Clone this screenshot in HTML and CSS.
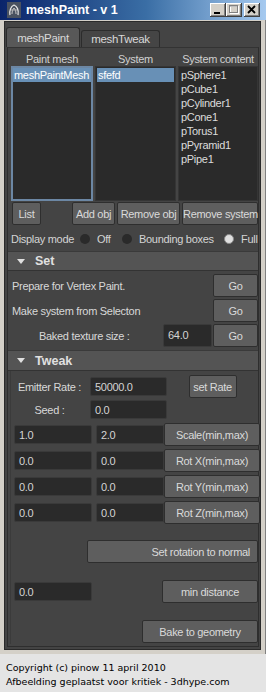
FILE: index.html
```html
<!DOCTYPE html>
<html lang="en">

<head>
    <meta charset="UTF-8">
    <meta name="viewport" content="width=device-width, initial-scale=1.0">
    <title>meshPaint - v 1</title>
    <link rel="stylesheet" href="styles.css">
</head>

<body>
    <div class="window">
        <!-- Title bar -->
        <div class="titlebar">
            <svg class="app-icon" width="14" height="16" viewBox="0 0 14 16">
                <rect x="0" y="0" width="14" height="16" fill="#4a5260" />
                <path d="M3 13 C2 9 4 4 7 3 C10 4 12 8 11 13" fill="none" stroke="#e8e8e8" stroke-width="1.3" />
                <path d="M5 12 C5 9 6 7 7 6 C8 7 9 9 9 12" fill="none" stroke="#c8c8c8" stroke-width="1" />
                <path d="M4 8 L10 8" stroke="#b0b0b0" stroke-width="1" />
            </svg>
            <span class="title">meshPaint - v 1</span>
            <div class="win-btns">
                <span class="win-btn">
                    <svg width="16" height="14" viewBox="0 0 16 14"><rect x="4" y="9" width="6" height="2" fill="#000" /></svg>
                </span>
                <span class="win-btn">
                    <svg width="16" height="14" viewBox="0 0 16 14">
                        <rect x="4.5" y="3.5" width="8" height="7" fill="none" stroke="#fff" />
                        <rect x="3.5" y="2.5" width="8" height="7" fill="none" stroke="#808080" />
                        <rect x="3.5" y="2.5" width="8" height="1" fill="#808080" />
                    </svg>
                </span>
                <span class="win-btn close">
                    <svg width="16" height="14" viewBox="0 0 16 14"><path d="M4 3 L11 10 M11 3 L4 10" stroke="#000" stroke-width="1.8" /></svg>
                </span>
            </div>
        </div>

        <div class="frame">
            <div class="client">
                <div class="tabs">
                    <div class="tab active">meshPaint</div>
                    <div class="tab">meshTweak</div>
                </div>

                <div class="panel">
                    <!-- Mesh / system lists -->
                    <div class="lists">
                        <div class="col-head">Paint mesh</div>
                        <div class="col-head">System</div>
                        <div class="col-head">System content</div>
                        <div class="list focus">
                            <div class="item selected">meshPaintMesh</div>
                        </div>
                        <div class="list">
                            <div class="item selected">sfefd</div>
                        </div>
                        <div class="list">
                            <div class="item">pSphere1</div>
                            <div class="item">pCube1</div>
                            <div class="item">pCylinder1</div>
                            <div class="item">pCone1</div>
                            <div class="item">pTorus1</div>
                            <div class="item">pPyramid1</div>
                            <div class="item">pPipe1</div>
                        </div>
                    </div>

                    <div class="btn-row">
                        <button class="btn btn-list">List</button>
                        <button class="btn btn-add">Add obj</button>
                        <button class="btn btn-remove">Remove obj</button>
                        <button class="btn btn-remove-sys">Remove system</button>
                    </div>

                    <div class="radio-row">
                        <span class="radio-label">Display mode</span>
                        <span class="radio"></span><span class="opt opt-off">Off</span>
                        <span class="radio"></span><span class="opt opt-bb">Bounding boxes</span>
                        <span class="radio checked"></span><span class="opt">Full</span>
                    </div>

                    <!-- Set section -->
                    <div class="sec-head"><span class="arrow"></span>Set</div>
                    <div class="sec-body set-body">
                        <div class="set-row">
                            <span class="set-label">Prepare for Vertex Paint.</span>
                            <button class="btn btn-go">Go</button>
                        </div>
                        <div class="set-row">
                            <span class="set-label">Make system from Selecton</span>
                            <button class="btn btn-go">Go</button>
                        </div>
                        <div class="set-row">
                            <span class="set-label baked">Baked texture size :</span>
                            <div class="field field-baked">64.0</div>
                            <button class="btn btn-go">Go</button>
                        </div>
                    </div>

                    <!-- Tweak section -->
                    <div class="sec-head tweak-head"><span class="arrow"></span>Tweak</div>
                    <div class="sec-body tweak-body">
                        <div class="rate-row">
                            <span class="rate-label">Emitter Rate :</span>
                            <div class="field field-rate">50000.0</div>
                            <div class="rate-btn-cell"><button class="btn btn-rate">set Rate</button></div>
                        </div>
                        <div class="seed-row">
                            <span class="rate-label">Seed :</span>
                            <div class="field field-rate">0.0</div>
                        </div>

                        <div class="vec-row first">
                            <div class="field field-min">1.0</div>
                            <div class="field field-max">2.0</div>
                            <button class="btn btn-vec">Scale(min,max)</button>
                        </div>
                        <div class="vec-row">
                            <div class="field field-min">0.0</div>
                            <div class="field field-max">0.0</div>
                            <button class="btn btn-vec">Rot X(min,max)</button>
                        </div>
                        <div class="vec-row">
                            <div class="field field-min">0.0</div>
                            <div class="field field-max">0.0</div>
                            <button class="btn btn-vec">Rot Y(min,max)</button>
                        </div>
                        <div class="vec-row">
                            <div class="field field-min">0.0</div>
                            <div class="field field-max">0.0</div>
                            <button class="btn btn-vec">Rot Z(min,max)</button>
                        </div>

                        <div class="wide-row">
                            <button class="btn btn-normal">Set rotation to normal</button>
                        </div>
                        <div class="dist-row">
                            <div class="field field-min">0.0</div>
                            <button class="btn btn-vec">min distance</button>
                        </div>
                        <div class="bake-row">
                            <button class="btn btn-bake">Bake to geometry</button>
                        </div>
                    </div>
                </div>
            </div>
        </div>
    </div>

    <div class="caption">
        <div>Copyright (c) pinow 11 april 2010</div>
        <div>Afbeelding geplaatst voor kritiek - 3dhype.com</div>
    </div>
</body>

</html>
```

FILE: styles.css
```css
body {
    margin: 0;
    width: 266px;
    background-color: #e4e4e4;
    font-family: "Liberation Sans", Arial, sans-serif;
    font-size: 11px;
}

/* Window chrome */
.window {
    background-color: #d4d0c8;
    white-space: nowrap;
}

.titlebar {
    height: 20px;
    display: flex;
    align-items: center;
    padding-left: 7px;
    background: linear-gradient(to right, #0a246a, #3a6ea5 55%, #a6caf0);
}

.app-icon {
    display: block;
}

.title {
    flex: 1;
    margin-left: 5px;
    color: #fff;
    font-weight: bold;
    font-size: 12.5px;
}

.win-btns {
    display: flex;
    margin-right: 6px;
}

.win-btn {
    width: 16px;
    height: 14px;
    background-color: #d4d0c8;
    box-shadow: inset -1px -1px #404040, inset 1px 1px #fff, inset -2px -2px #808080;
}

.win-btn svg {
    display: block;
}

.win-btn.close {
    margin-left: 2px;
}

.frame {
    padding: 1px 4px 4px 4px;
    border-right: 1px solid #808080;
}

.client {
    background-color: #444;
    border: 1px solid #2a2a2a;
    padding: 5px 0 2px 0;
    letter-spacing: -0.3px;
}

/* Tabs */
.tabs {
    display: flex;
    align-items: flex-end;
    margin-left: 1px;
    height: 20px;
}

.tab {
    width: 79px;
    height: 17px;
    line-height: 17px;
    text-align: center;
    font-size: 11.5px;
    color: #d8d8d8;
    background-color: #454545;
    border: 1px solid #2c2c2c;
    border-bottom: none;
    border-radius: 3px 3px 0 0;
    box-sizing: border-box;
}

.tab.active {
    width: 74px;
    height: 20px;
    line-height: 20px;
    background-color: #585858;
    margin-right: 1px;
}

.panel {
    margin: 0 1px 0 2px;
    border: 1px solid #2e2e2e;
    border-top-color: #333;
    background-color: #444;
    padding: 4px 0 2px 3px;
}

/* Lists */
.lists {
    display: grid;
    grid-template-columns: 82px 81px 80px;
    grid-template-rows: 14px 135px;
    column-gap: 2px;
}

.col-head {
    text-align: center;
    color: #d0d0d0;
    line-height: 14px;
}

.list {
    background-color: #2a2a2a;
    border: 1px solid #353535;
    padding: 1px;
    overflow: hidden;
}

.list.focus {
    border: 2px solid #6c87a4;
    padding: 0;
}

.item {
    height: 14px;
    line-height: 14px;
    padding-left: 1px;
    color: #dcdcdc;
}

.item.selected {
    background-color: #6890b6;
    color: #fff;
}

/* Buttons */
.btn {
    font-family: "Liberation Sans", Arial, sans-serif;
    font-size: 11px;
    letter-spacing: -0.3px;
    white-space: nowrap;
    color: #dadada;
    background-color: #5e5e5e;
    border: 1px solid #2e2e2e;
    border-radius: 2px;
    height: 23px;
    padding: 0;
    text-align: center;
    flex-shrink: 0;
}

.btn-row {
    display: flex;
    margin-top: 1px;
    gap: 2px;
}

.btn-list {
    width: 29px;
    margin-left: 1px;
    margin-right: auto;
}

.btn-add {
    width: 43px;
}

.btn-remove {
    width: 63px;
}

.btn-remove-sys {
    width: 76px;
}

/* Display mode radios */
.radio-row {
    display: flex;
    align-items: center;
    height: 18px;
    margin-top: 5px;
    color: #d4d4d4;
}

.radio-row span {
    flex-shrink: 0;
}

.radio-label {
    width: 69px;
}

.radio {
    width: 10px;
    height: 10px;
    border-radius: 50%;
    background-color: #2a2a2a;
    margin-right: 7px;
}

.radio.checked {
    background-color: #e0e0e0;
    border: 1px solid #8a8a8a;
    box-sizing: border-box;
}

.opt-off {
    width: 25px;
}

.opt-bb {
    width: 85px;
}

/* Collapsible sections */
.sec-head {
    display: flex;
    align-items: center;
    height: 20px;
    margin: 3px 0 0 -3px;
    background-color: #545454;
    border-top: 1px solid #3a3a3a;
    border-bottom: 1px solid #333;
    box-sizing: border-box;
    color: #e0e0e0;
    font-weight: bold;
    font-size: 12.5px;
    letter-spacing: 0;
}

.arrow {
    width: 0;
    height: 0;
    border-left: 4px solid transparent;
    border-right: 4px solid transparent;
    border-top: 5px solid #e0e0e0;
    margin: 0 10px 0 9px;
}

.sec-body {
    color: #d8d8d8;
}

.set-body {
    padding: 3px 0 3px 0;
}

.set-row {
    display: flex;
    align-items: center;
    height: 23px;
    margin-bottom: 2px;
}

.set-row:last-child {
    margin-bottom: 0;
}

.set-label {
    flex: 1;
    padding-left: 1px;
}

.set-label.baked {
    padding-left: 28px;
}

.btn-go {
    width: 45px;
}

.field {
    height: 19px;
    line-height: 19px;
    box-sizing: border-box;
    background-color: #2a2a2a;
    border: 1px solid #3a3a3a;
    border-radius: 2px;
    padding-left: 4px;
    color: #d4d4d4;
    flex-shrink: 0;
}

.field-baked {
    width: 49px;
    height: 23px;
    line-height: 21px;
    margin-right: 1px;
}

.tweak-head {
    margin-top: 0;
    height: 21px;
}

.tweak-body {
    padding: 4px 0 0 0;
    border-left: 1px solid #3b3b3b;
    margin-left: -1px;
}

.rate-row,
.seed-row {
    display: flex;
    align-items: center;
    height: 23px;
}

.seed-row {
    height: 19px;
    margin-top: 2px;
}

.rate-label {
    width: 77px;
    text-align: center;
    flex-shrink: 0;
}

.field-rate {
    width: 77px;
    margin-left: 2px;
}

.rate-btn-cell {
    flex: 1;
    display: flex;
    justify-content: center;
}

.btn-rate {
    width: 48px;
}

.vec-row {
    display: flex;
    align-items: center;
    height: 23px;
    margin-top: 3px;
}

.vec-row.first {
    margin-top: 4px;
}

.field-min {
    width: 78px;
    margin-left: 3px;
}

.field-max {
    width: 68px;
    margin-left: 4px;
    border-radius: 2px 0 0 2px;
}

.btn-vec {
    width: 96px;
    margin-left: auto;
}

.wide-row {
    display: flex;
    justify-content: flex-end;
    margin-top: 16px;
}

.btn-normal {
    width: 171px;
    text-align: right;
    padding-right: 7px;
}

.dist-row {
    display: flex;
    align-items: center;
    height: 23px;
    margin-top: 17px;
}

.bake-row {
    display: flex;
    justify-content: flex-end;
    margin-top: 17px;
    padding-bottom: 1px;
}

.btn-bake {
    width: 116px;
}

/* Caption under the window */
.caption {
    padding: 7px 0 0 6px;
    font-family: "DejaVu Sans", Verdana, sans-serif;
    font-size: 9.5px;
    line-height: 14px;
    color: #000;
}
```
